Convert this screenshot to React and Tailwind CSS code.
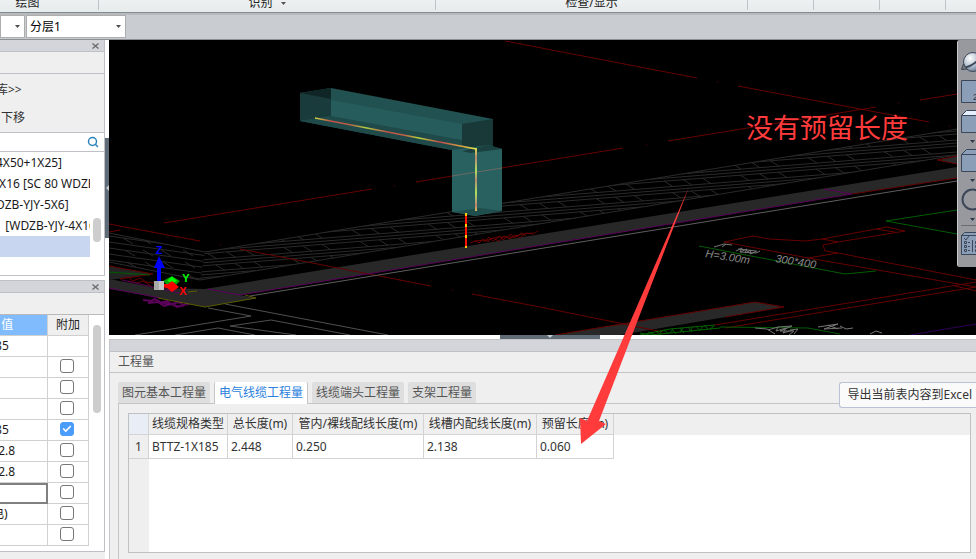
import React, { useState } from 'react';
import clsx from 'clsx';
import { Check, Search } from 'lucide-react';

const TABS = ['图元基本工程量', '电气线缆工程量', '线缆端头工程量', '支架工程量'];

const CABLES = ['4X50+1X25]', ' X16 [SC 80 WDZB-YJY-4X16]', 'DZB-YJY-5X6]', '   [WDZB-YJY-4X16]', ''];

const PROPERTIES = [
  { value: ' 85', extra: null },
  { value: '', extra: false },
  { value: '', extra: false },
  { value: '', extra: false },
  { value: ' 85', extra: true },
  { value: '  2.8', extra: false },
  { value: '  2.8', extra: false },
  { value: '', extra: false, current: true },
  { value: '电)', extra: false },
  { value: '', extra: false },
];

const QUANTITY_COLUMNS = [
  { label: '线缆规格类型', width: 'w-[79px]' },
  { label: '总长度(m)', width: 'w-[65px]' },
  { label: '管内/裸线配线长度(m)', width: 'w-[131px]' },
  { label: '线槽内配线长度(m)', width: 'w-[113px]' },
  { label: '预留长度(m)', width: 'w-[77px]' },
];

const QUANTITY_ROWS = [['BTTZ-1X185', '2.448', '0.250', '2.138', '0.060']];

function Caret({ className }) {
  return (
    <svg viewBox="0 0 5 3" className={clsx('h-[3px] w-[5px]', className)} aria-hidden="true">
      <path d="M0 0H5L2.5 3Z" fill="currentColor" />
    </svg>
  );
}

function RibbonGroup({ label, menu, className }) {
  return (
    <div className={clsx('flex h-[10px] shrink-0 items-end justify-center overflow-hidden border-r border-[#bfc3c5] pb-px', className)}>
      {label && (
        <span className="flex items-center gap-2 leading-3 text-[#1c1c1c]">
          {label}
          {menu && <Caret className="text-[#555]" />}
        </span>
      )}
    </div>
  );
}

function Ribbon() {
  return (
    <header className="flex h-[13px] shrink-0 overflow-hidden border-b border-[#858b90] bg-linear-to-b from-[#eef1f2] to-[#e6ebec]">
      <RibbonGroup label="绘图" className="w-[99px] pr-[43px]" />
      <RibbonGroup label="识别" menu className="w-[337px]" />
      <RibbonGroup label="检查/显示" className="w-[312px]" />
      <RibbonGroup className="w-[66px]" />
      <RibbonGroup className="w-[66px]" />
      <RibbonGroup className="w-[66px]" />
    </header>
  );
}

function FloorSelect({ label, options, className }) {
  return (
    <div className={clsx('relative', className)}>
      <select
        aria-label={label}
        className="block h-[23px] w-full appearance-none border border-[#adadad] bg-white pl-[3px] leading-5 text-black outline-none"
      >
        {options.map((o) => (
          <option key={o}>{o}</option>
        ))}
      </select>
      <Caret className="pointer-events-none absolute top-[10px] right-[5px] text-[#4d4d4d]" />
    </div>
  );
}

function PanelHeader({ onClose }) {
  return (
    <div className="flex h-3 shrink-0 items-center justify-end border-b border-[#c0c1c6] bg-[#d4d5db] pr-[5px]">
      {onClose && (
        <button type="button" aria-label="关闭" onClick={onClose} className="cursor-pointer">
          <svg viewBox="0 0 7 6" className="h-1.5 w-[7px]" stroke="#6e6e6e" strokeWidth="1.4">
            <path d="M0.5 0.5L6.5 5.5M6.5 0.5L0.5 5.5" />
          </svg>
        </button>
      )}
    </div>
  );
}

function ComponentList() {
  const [selected, setSelected] = useState(4);

  return (
    <section className="flex h-[236px] shrink-0 flex-col border-r border-b border-[#bfc0c5] bg-white">
      <PanelHeader onClose={() => {}} />
      <div className="h-[22px] border-b border-[#c0c1c6] bg-[#efefef]" />
      <div className="flex h-[59px] flex-col items-start gap-2 border-b border-[#c0c1c6] bg-[#efefef] pt-1.5 text-[#333]">
        <button type="button" className="-ml-1 h-5 cursor-pointer pr-1 leading-5">库&gt;&gt;</button>
        <button type="button" className="h-5 cursor-pointer pl-px leading-5">下移</button>
      </div>
      <label className="flex h-[19px] items-center border-b border-[#c0c1c6] pr-[5px]">
        <input type="text" aria-label="搜索" className="h-full w-full min-w-0 outline-none" />
        <Search size={12} strokeWidth={3} className="shrink-0 text-[#2b83bd]" />
      </label>
      <div className="flex grow">
        <ul className="w-[90px] overflow-hidden">
          {CABLES.map((name, i) => (
            <li key={i} className={clsx('h-[21px]', selected === i && 'bg-[#c8d7ef]')}>
              <button
                type="button"
                aria-label={name || '当前构件'}
                onClick={() => setSelected(i)}
                className="-ml-1 block h-full w-24 whitespace-pre text-left leading-[21px] text-[#1a1a1a]"
              >
                {name}
              </button>
            </li>
          ))}
        </ul>
        <div className="flex grow justify-center pt-[66px]">
          <div className="h-6 w-2 rounded-full bg-[#cdcdcd]" />
        </div>
      </div>
    </section>
  );
}

function ExtraCheckbox({ index, checked, onChange }) {
  return (
    <span className="relative mx-auto block size-3.5">
      <input
        type="checkbox"
        aria-label={`附加 ${index + 1}`}
        checked={checked}
        onChange={onChange}
        className="block size-3.5 appearance-none rounded-[3px] border border-[#777] bg-white checked:border-[#4b9dfb] checked:bg-[#4b9dfb]"
      />
      {checked && <Check size={10} strokeWidth={4} className="pointer-events-none absolute top-0.5 left-0.5 text-white" />}
    </span>
  );
}

function PropertyPanel() {
  const [rows, setRows] = useState(PROPERTIES);

  const toggle = (index) => {
    setRows(rows.map((r, i) => (i === index ? { ...r, extra: !r.extra } : r)));
  };

  return (
    <section className="flex h-[272px] shrink-0 flex-col overflow-hidden border-t border-r border-b border-[#bfc0c5] bg-white">
      <PanelHeader onClose={() => {}} />
      <div className="h-[22px] shrink-0 border-b border-[#b9babd] bg-[#efefef]" />
      <div className="flex grow overflow-hidden">
        <table className="h-[231px] w-[89px] shrink-0 table-fixed border-separate border-spacing-0">
          <thead>
            <tr className="h-[21px]">
              <th className="h-[21px] w-12 overflow-hidden border-r border-b border-[#d0d0d0] bg-[#80bcfd] p-0 text-left font-normal text-white">
                <span className="-ml-2 block whitespace-pre leading-5">{'   值'}</span>
              </th>
              <th className="h-[21px] border-r border-b border-[#d0d0d0] bg-[#efefef] p-0 leading-5 font-normal text-[#222]">附加</th>
            </tr>
          </thead>
          <tbody>
            {rows.map((row, i) => (
              <tr key={i} className="h-[21px]">
                <td
                  className={clsx(
                    'h-[21px] overflow-hidden p-0 text-[#1a1a1a]',
                    row.current ? 'border-2 border-l-0 border-[#808080]' : 'border-r border-b border-[#d0d0d0]'
                  )}
                >
                  {row.value && <span className="-ml-2 block whitespace-pre leading-5">{row.value}</span>}
                </td>
                <td className="h-[21px] border-r border-b border-[#d0d0d0] p-0 pr-0.5 pb-0.5">
                  {row.extra !== null && <ExtraCheckbox index={i} checked={row.extra} onChange={() => toggle(i)} />}
                </td>
              </tr>
            ))}
          </tbody>
        </table>
        <div className="flex grow justify-center pt-2.5">
          <div className="h-[88px] w-2 rounded-full bg-[#cdcdcd]" />
        </div>
      </div>
    </section>
  );
}

// Floor hatch: shallow lines grouped in threes, with joints inside each strip.
const hatchRight = [];
const jointsRight = [];
for (let k = -14; k < 12; k += 1) {
  const y = 206 + k * 12;
  [-3, 3, 6].forEach((d) => hatchRight.push(`M200 ${y + d + 27}L957 ${y + d - 33}`));
  for (let n = 0; n < 42; n += 1) {
    if (n % 4 === 3) continue;
    const x = 200 + n * 19 + ((k + 14) % 3) * 8;
    const yy = y - (x - 540) * 0.08;
    jointsRight.push(`M${x} ${yy - 3}l9 5.5`);
  }
}
const hatchLeft = [];
for (let k = 0; k < 9; k += 1) {
  hatchLeft.push(`M109 ${230 + k * 6}L208 ${244 + k * 6}`);
  [122, 140, 158, 180].forEach((x) => {
    if (k % 2) hatchLeft.push(`M${x + k} ${232 + k * 6}l10 6`);
  });
}

function Scene() {
  return (
    <svg
      viewBox="109 40 867 295"
      preserveAspectRatio="xMinYMin slice"
      className="block h-[295px] w-full bg-black"
      fill="none"
      role="img"
      aria-label="三维视图"
    >
      <defs>
        <clipPath id="floorRight">
          <path d="M205 252L957 129V155L200 280Z" />
        </clipPath>
        <clipPath id="floorLeft">
          <path d="M109 233L205 252L200 280L109 262Z" />
        </clipPath>
        <linearGradient id="cableRun" x1="315" y1="118" x2="475" y2="148" gradientUnits="userSpaceOnUse">
          <stop offset="0" stopColor="#c8d040" />
          <stop offset=".1" stopColor="#c05048" />
          <stop offset=".22" stopColor="#b86048" />
          <stop offset=".32" stopColor="#b0d040" />
          <stop offset=".45" stopColor="#c05048" />
          <stop offset=".56" stopColor="#c06048" />
          <stop offset=".65" stopColor="#b8d83c" />
          <stop offset=".78" stopColor="#c04848" />
          <stop offset="1" stopColor="#e8e040" />
        </linearGradient>
        <linearGradient id="cableDrop" x1="0" y1="148" x2="0" y2="212" gradientUnits="userSpaceOnUse">
          <stop offset="0" stopColor="#d8e050" />
          <stop offset=".15" stopColor="#b88870" />
          <stop offset=".36" stopColor="#a8e060" />
          <stop offset=".5" stopColor="#b88870" />
          <stop offset=".7" stopColor="#a8e060" />
          <stop offset=".9" stopColor="#c08070" />
          <stop offset="1" stopColor="#d8d050" />
        </linearGradient>
      </defs>

      {/* floor hatch */}
      <g stroke="#2a2a2a">
        <path clipPath="url(#floorRight)" d={hatchRight.join('')} />
        <path clipPath="url(#floorRight)" d={jointsRight.join('')} />
        <path clipPath="url(#floorLeft)" d={hatchLeft.join('')} />
        <path d="M109 233L205 252L957 129M109 262L200 280L957 155" />
      </g>

      {/* walls */}
      <path d="M109 279L157 288L205 289L505 240L957 167V178L852 194L240 295L256 298L205 307L160 298L109 289Z" fill="#282828" />
      <path d="M109 266L153 274L109 280Z" fill="#242424" />
      <path d="M555 335L755 302L784 307L620 335Z" fill="#282828" />
      <path d="M937 160L957 156V164Z" fill="#282828" />

      {/* axis lines */}
      <g stroke="#660000">
        <path d="M164 223L372 189M394 186h1M416 182L623 148M646 145h1M668 141L876 107M898 103h1M920 100L957 94" />
        <path d="M109 224L200 241M220 245h1M240 249L431 286M452 290h1M472 294L540 307L663 332M109 232L120 230" />
        <path d="M505 41L697 78M717 82h1M738 86L929 122M949 126h1" />
        <path d="M109 266L153 274L120 279M852 194L957 178M957 156L937 160L957 164" />
        <path d="M555 335L755 302L784 307L725 317" />
        <path d="M724 242L753 236L770 239L805 241L822 239L887 227L905 231L838 242L822 239M838 242L823 245L825 251L838 253L976 280M724 242L808 258L976 287M808 258L838 253M876 229L895 232" />
        <path d="M715 325L976 282M725 328L976 287M955 286L976 291" />
        <path d="M470 243l6 -2l3 2l4 -4l5 3l4 -4l7 3l5 -5l6 3l5 -4l5 3l6 -5l7 1l5 -3M474 241l14 -1l9 -3l14 0l12 -3l10 -1M484 242l5 -5l4 4l7 -5l3 4l8 -6l3 4l8 -5l4 3" />
        <path d="M120 279l8 -2l5 4l7 -3l6 4l8 1M128 281l8 2l7 -2l8 5" />
      </g>

      <path d="M240 295L852 194L824 189M109 288L160 298M208 289L240 295M122 280L180 293" stroke="#5a005a" />
      <path d="M143 300l8 1l4 -2l5 4l7 -2l5 3l7 -2l4 3l6 -1M148 303l10 -1l6 4l8 -2l5 3l8 -2M155 299l7 4l9 1l8 3" stroke="#5a005a" strokeWidth="2" />
      <path d="M910 335L976 324" stroke="#30005a" />
      <path d="M158 298L205 307L256 298L245 295M188 292L197 291" stroke="#5c5c00" />
      <path d="M109 272L150 275M699 246L845 274L876 271M957 210L886 221L957 234M720 327L808 328L840 334" stroke="#005c00" />
      <path
        d="M640 335L670 329L715 325M650 335L720 328M640 333l10 2M648 332l8 3M656 331l5 4M664 330l5 4M672 329l4 5M680 328l4 5M688 327l4 5M696 326l4 5M704 325l4 4M660 333l3 -3M670 333l3 -4M680 332l3 -4M690 331l3 -4M700 330l3 -4M710 329l4 -3"
        stroke="#006400"
      />
      <path d="M250 296L593 240L957 181" stroke="#5e5e5e" />
      <path d="M208 308L251 316L135 335M225 304L388 335M175 335L218 328L255 335M296 335L230 326L271 320L350 335" stroke="#505050" />

      {/* drawing notes */}
      <g stroke="#777">
        <path d="M714 247l10 -3l8 1M722 247l4 -3" />
        <path d="M736 251l6 -3l-2 4l7 -3l-2 4l6 -3l-1 4l7 -3M740 252l16 1l4 -2M738 249l18 2" />
        <path d="M755 328l12 1l8 5M768 330l10 -3l-2 4l10 -3l-3 5l10 -3M778 327l14 -1l-12 5l14 0l-5 4M790 330l8 -1l-4 5M818 327l20 -3l-14 5l18 -1M828 325l10 4M840 326l6 3l7 -1M870 334l6 -3l6 2" />
      </g>
      <g fill="#8a8a8a" fontFamily="'Liberation Sans', sans-serif" fontSize="11" fontStyle="italic">
        <text x="705" y="257" transform="rotate(9 705 257)">H=3.00m</text>
        <text x="775" y="262" transform="rotate(9 775 262)">300*400</text>
      </g>

      {/* cable tray, horizontal run and riser */}
      <path d="M300 93L331 88L493 119V147L462 152L300 121Z" fill="#215150" />
      <path d="M331 100L462 124V149L331 116Z" fill="#265d5c" />
      <path d="M300 93L331 88V116L300 121Z" fill="#1a3b3b" />
      <path d="M300 93L331 88V99Z" fill="#102626" />
      <path d="M300 121L331 116L462 140V152Z" fill="#1f4a49" />
      <path d="M462 124L493 119V147L462 152Z" fill="#193838" />
      <path d="M452 150L488 145L502 149V211L475 216L452 212Z" fill="#28615f" />
      <path d="M462 151L488 145L502 149L470 153Z" fill="#1b4040" />
      <path d="M452 212L480 208L502 211L475 216Z" fill="#1f4e4d" />
      <path d="M452 176L502 168" stroke="#6b6a63" />
      <path d="M315 118L476 149" stroke="url(#cableRun)" strokeWidth="1.5" />
      <path d="M475 148h2V211h-2Z" fill="url(#cableDrop)" />
      <path d="M466 213V248" stroke="#ff1000" strokeWidth="2" />
      <path d="M466 213V248" stroke="#ffc800" strokeWidth="2" strokeDasharray="3 8" />

      {/* coordinate axes */}
      <path d="M157 266h4V281h-4ZM154 268L159 256L165 268Z" fill="#0000ff" />
      <path d="M163 281L170 277L175 278L180 281L175 286L166 284Z" fill="#00a000" />
      <path d="M167 281L172 276L177 281L173 283Z" fill="#00ff00" />
      <path d="M160 284L168 284L172 281L179 287L172 292L167 288L160 287Z" fill="#ff0000" />
      <path d="M154 281h10v9h-10Z" fill="#a8a8a8" />
      <path d="M159 281h5v9h-5Z" fill="#c4c4c4" />
      <g fontFamily="'Liberation Sans', sans-serif" fontSize="11" fontWeight="bold" textAnchor="middle">
        <text x="159" y="254" fill="#0000ff">Z</text>
        <text x="186" y="282" fill="#00ff00">Y</text>
        <text x="183" y="295" fill="#ff0000">X</text>
      </g>
    </svg>
  );
}

function ViewTool({ label, menu, children }) {
  return (
    <button type="button" aria-label={label} className="flex cursor-pointer flex-col items-start gap-1.5 overflow-hidden">
      <svg width="24" height="24" viewBox="0 0 24 24" fill="#8b9eb8" stroke="#3b4658" className="shrink-0">
        {children}
      </svg>
      {menu && <Caret className="ml-[9px] shrink-0 text-[#2f3949]" />}
    </button>
  );
}

function ViewToolbar() {
  return (
    <nav
      aria-label="视图"
      className="absolute top-0 right-0 flex h-[227px] w-[19px] flex-col gap-1.5 overflow-hidden rounded-l-[3px] border-l border-[#c8cacd] bg-[#97999e] pt-2.5 pl-[3px]"
    >
      <ViewTool label="动态观察">
        <defs>
          <radialGradient id="orb" cx=".35" cy=".3" r=".7">
            <stop offset="0" stopColor="#fff" />
            <stop offset=".6" stopColor="#b4c0cf" />
            <stop offset="1" stopColor="#71849d" />
          </radialGradient>
        </defs>
        <circle cx="12" cy="12" r="9.5" fill="url(#orb)" />
        <path d="M4 17.5Q12 16 19 8" fill="none" strokeWidth="2" />
        <path d="M0.5 19.5L2.5 14L6 19Z" fill="#777" />
      </ViewTool>
      <ViewTool label="二维">
        <path d="M0.5 0.5H23.5V22.5H0.5Z" />
        <text x="12" y="20" fontSize="9" fill="#2b3545" stroke="none" fontFamily="'Liberation Sans', sans-serif">2</text>
      </ViewTool>
      <ViewTool label="俯视" menu>
        <path d="M0.5 5.5L5.5 0.5H23.5V5.5Z" fill="#e4eefc" />
        <path d="M0.5 5.5H23.5V22.5H0.5Z" />
      </ViewTool>
      <ViewTool label="前视" menu>
        <path d="M0.5 5.5L5.5 0.5H23.5V5.5Z" />
        <path d="M0.5 5.5H23.5V22.5H0.5Z" />
      </ViewTool>
      <ViewTool label="旋转" menu>
        <circle cx="11.5" cy="11.5" r="10" fill="none" strokeWidth="2" />
      </ViewTool>
      <div className="-mt-0.5 h-px shrink-0 bg-[#686c72]" />
      <ViewTool label="显示设置">
        <path d="M0.5 3.5L3.5 0.5H23.5V3.5Z" />
        <path d="M0.5 3.5H23.5V22.5H0.5Z" />
        <path d="M3 6L5 8L8 4M3.5 9.5h2v2h-2ZM3.5 13.5h2v2h-2ZM3.5 17.5h2v2h-2ZM7 10.5h2M7 14.5h2M7 18.5h2M11.5 8V20M14.5 9.5h2v2h-2ZM14.5 13.5h2v2h-2ZM14.5 17.5h2v2h-2Z" fill="none" />
      </ViewTool>
    </nav>
  );
}

function QuantityPanel() {
  const [activeTab, setActiveTab] = useState(1);

  return (
    <section className="flex grow flex-col border-t border-l border-[#c4c5c9] bg-[#efefef]">
      <PanelHeader />
      <h2 className="h-[21px] border-b border-[#c4c5c9] pl-2 leading-5 text-[#555]">工程量</h2>
      <div className="flex grow flex-col pt-[9px] pl-2">
        <div className="flex h-[22px] items-start border-b border-[#c4c5c9]">
          <div role="tablist" className="flex items-start gap-1">
            {TABS.map((tab, i) => (
              <button
                key={tab}
                type="button"
                role="tab"
                aria-selected={activeTab === i}
                onClick={() => setActiveTab(i)}
                className={clsx(
                  'cursor-pointer rounded-t-xs px-1 leading-5',
                  activeTab === i
                    ? 'h-[22px] border-x border-[#c4c5c9] bg-white text-[#2a7fde]'
                    : 'h-[21px] bg-[#dedede] text-[#555]'
                )}
              >
                {tab}
              </button>
            ))}
          </div>
          <button
            type="button"
            className="z-10 ml-auto h-[26px] cursor-pointer rounded-l-[3px] border border-r-0 border-[#b9c3d6] bg-[#fafafa] pr-1 pl-2 leading-6 whitespace-nowrap text-[#333]"
          >
            导出当前表内容到Excel
          </button>
        </div>
        <div className="flex grow border-l border-[#c4c5c9] pt-[9px] pr-[5px] pb-1.5 pl-[9px]">
          <div className="flex grow flex-col border border-[#bfc0c3] bg-white">
            <div className="flex bg-linear-to-b from-[#efefef] from-[21px] to-white to-[21px]">
              <table className="table-fixed border-separate border-spacing-0 text-[#333]">
                <thead>
                  <tr>
                    <th aria-label="序号" className="h-[21px] w-5 border-r border-b border-[#d3d3d3] bg-[#e9eef6] p-0" />
                    {QUANTITY_COLUMNS.map((col) => (
                      <th
                        key={col.label}
                        className={clsx('h-[21px] border-r border-b border-[#d3d3d3] bg-[#efefef] p-0 leading-5 font-normal whitespace-nowrap', col.width)}
                      >
                        {col.label}
                      </th>
                    ))}
                  </tr>
                </thead>
                <tbody>
                  {QUANTITY_ROWS.map((row, i) => (
                    <tr key={row[0]}>
                      <th className="h-6 border-r border-b border-[#d3d3d3] bg-[#efefef] p-0 font-normal">{i + 1}</th>
                      {row.map((cell, c) => (
                        <td key={c} className="h-6 border-r border-b border-[#d3d3d3] bg-white p-0 pl-[3px] leading-5 whitespace-nowrap">
                          {cell}
                        </td>
                      ))}
                    </tr>
                  ))}
                </tbody>
              </table>
            </div>
            <div className="w-5 grow bg-[#efefef]" />
          </div>
        </div>
      </div>
    </section>
  );
}

export default function App() {
  return (
    <div className="flex h-screen flex-col overflow-hidden bg-white font-['Noto_Sans','Noto_Sans_CJK_SC',sans-serif] text-xs">
      <Ribbon />
      <div className="flex h-[27px] shrink-0 items-start gap-px border-t-2 border-b border-t-[#b7bbc0] border-b-[#8d8f92] bg-[#c9ccd0]">
        <FloorSelect label="楼层" options={['']} className="w-[25px]" />
        <FloorSelect label="分层" options={['分层1', '分层2']} className="w-[100px]" />
      </div>
      <main className="flex min-h-0 grow">
        <aside className="flex w-[105px] shrink-0 flex-col bg-white">
          <ComponentList />
          <div className="h-1 shrink-0" />
          <PropertyPanel />
          <div className="grow bg-[#efefef]" />
        </aside>
        <div className="w-1 shrink-0 pt-[98px]">
          <div className="flex h-[100px] items-center justify-end bg-[#5f6b77]">
            <svg viewBox="0 0 3 6" className="h-1.5 w-[3px]">
              <path d="M3 0V6L0 3Z" fill="#c5c9cd" />
            </svg>
          </div>
        </div>
        <div className="relative flex min-w-0 grow flex-col">
          <div className="relative shrink-0">
            <Scene />
            <ViewToolbar />
          </div>
          <div className="flex h-1 shrink-0 justify-center pl-[15px]">
            <div className="flex w-[100px] justify-center bg-[#5f6b77]">
              <svg viewBox="0 0 6 3" className="h-[3px] w-1.5">
                <path d="M0 0H6L3 3Z" fill="#c5c9cd" />
              </svg>
            </div>
          </div>
          <QuantityPanel />
          {/* markup drawn over both the view and the table */}
          <svg viewBox="109 40 867 519" className="pointer-events-none absolute top-0 left-0 z-20 h-[519px] w-[867px]">
            <path d="M689 187L599 421L606 424L581 444L580 418L587 421Z" fill="#ff3b3b" />
            <text x="746" y="138" fontSize="27" fill="#ff3b3b" fontFamily="'Noto Sans CJK SC', sans-serif">没有预留长度</text>
          </svg>
        </div>
      </main>
    </div>
  );
}
